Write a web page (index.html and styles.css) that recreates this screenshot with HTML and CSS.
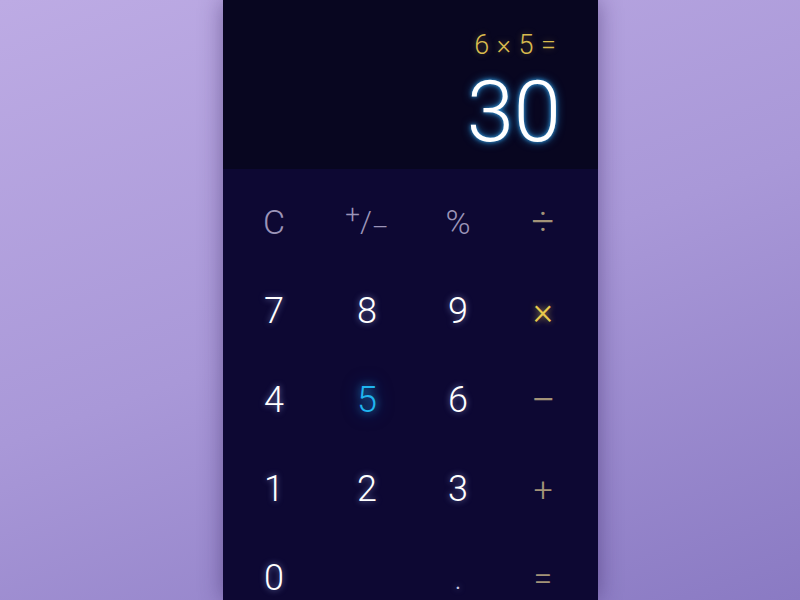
FILE: index.html
```html
<!DOCTYPE html>
<html>
<head>
<meta charset="utf-8">
<link rel="stylesheet" href="styles.css">
</head>
<body>
<div class="calc">
  <div class="display">
    <div class="expr">6 × 5 =</div>
    <div class="result">30</div>
  </div>
  <div class="keys">
    <div class="key fn">C</div>
    <div class="key fn pm"><span class="sup">+</span>/<span class="sub">–</span></div>
    <div class="key fn">%</div>
    <div class="key op div">÷</div>

    <div class="key num">7</div>
    <div class="key num">8</div>
    <div class="key num">9</div>
    <div class="key op active">×</div>

    <div class="key num">4</div>
    <div class="key num sel">5</div>
    <div class="key num">6</div>
    <div class="key op minus">−</div>

    <div class="key num">1</div>
    <div class="key num">2</div>
    <div class="key num">3</div>
    <div class="key op">+</div>

    <div class="key num">0</div>
    <div class="key num"></div>
    <div class="key num dot">.</div>
    <div class="key op">=</div>
  </div>
</div>
</body>
</html>
```
FILE: styles.css
```css
html, body {
  margin: 0;
  padding: 0;
  height: 600px;
  overflow: hidden;
}
body {
  background: linear-gradient(160deg, #bdabe4 0%, #a998d8 50%, #8a7ac3 100%);
  font-family: Roboto, "Noto Sans", sans-serif;
  display: flex;
  justify-content: center;
  padding-left: 21px;
  box-sizing: border-box;
}
.calc {
  width: 375px;
  height: 600px;
  display: flex;
  flex-direction: column;
  overflow: hidden;
  box-shadow: 0 0 22px rgba(40, 20, 80, 0.45);
}
.display {
  flex: 0 0 169px;
  background: #080620;
  box-sizing: border-box;
  padding: 28px 42px 0 0;
  text-align: right;
}
.expr {
  color: #d9bb4e;
  font-size: 27px;
  font-weight: 300;
  line-height: 34px;
  word-spacing: 1px;
  text-shadow: 0 0 6px rgba(217, 187, 78, 0.35);
}
.result {
  color: #ffffff;
  font-size: 85px;
  font-weight: 300;
  line-height: 90px;
  margin-top: 5px;
  margin-right: -5px;
  text-shadow: 0 0 4px rgba(60, 180, 255, 0.9), 0 0 10px rgba(40, 160, 240, 0.7);
}
.keys {
  flex: 1 0 auto;
  background: #0d0833;
  display: grid;
  grid-template-columns: 92px 94px 88px 82px;
  grid-auto-rows: 89px;
  padding: 8px 14px 0 5px;
  box-sizing: border-box;
}
.key {
  display: flex;
  align-items: center;
  justify-content: center;
  font-size: 36px;
  font-weight: 300;
  color: #ffffff;
}
.num {
  text-shadow: 0 0 6px rgba(170, 190, 255, 0.6);
}
.fn {
  color: #9b94b8;
  font-size: 34px;
}
.pm {
  font-size: 30px;
}
.pm .sup {
  position: relative;
  top: -8px;
  font-size: 26px;
}
.pm .sub {
  position: relative;
  top: 5px;
  font-size: 26px;
}
.op {
  color: #a39378;
  font-size: 34px;
}
.div {
  font-size: 40px;
}
.minus {
  font-size: 44px;
}
.active {
  color: #e8c94c;
  font-size: 38px;
  text-shadow: 0 0 6px rgba(232, 201, 76, 0.7);
}
.sel {
  color: #20b5f0;
  text-shadow: 0 0 8px rgba(30, 170, 240, 0.9), 0 0 18px rgba(30, 140, 230, 0.5);
}
.dot {
  color: #c9c6e0;
  align-items: flex-end;
  padding-bottom: 26px;
  font-size: 30px;
}
```
